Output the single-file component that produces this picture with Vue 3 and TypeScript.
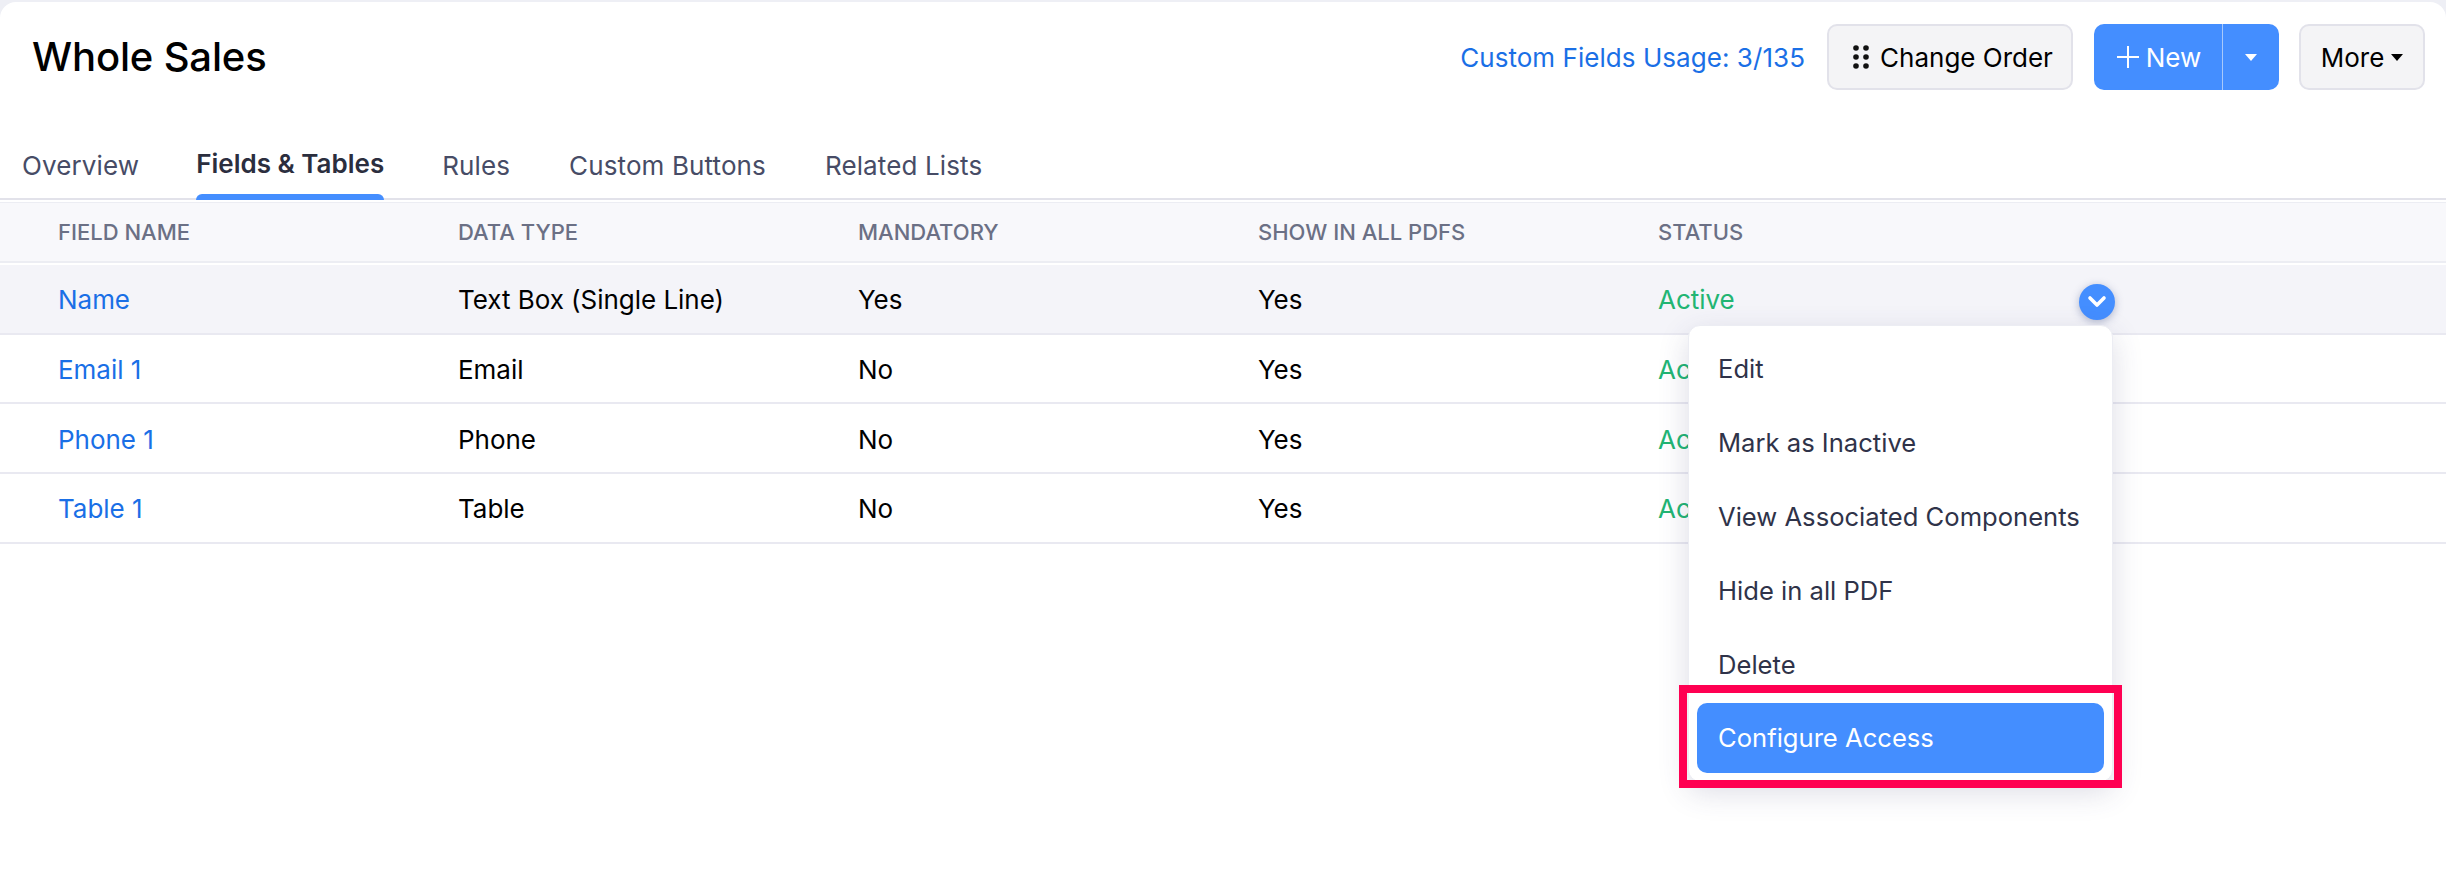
<template>
  <div class="page">
    <div class="sheet">
      <header class="top-bar">
        <h1 class="title">Whole Sales</h1>
        <div class="actions">
          <a class="usage">Custom Fields Usage: 3/135</a>
          <button class="btn btn-order">
            <svg class="grip" width="16" height="24" viewBox="0 0 16 24">
              <circle v-for="dot in gripDots" :key="dot.x + '-' + dot.y" :cx="dot.x" :cy="dot.y" r="2.8" fill="#111" />
            </svg>
            Change Order
          </button>
          <div class="btn-new">
            <button class="new-main">
              <svg width="26" height="26" viewBox="0 0 26 26">
                <path d="M13 2v22M2 13h22" stroke="#fff" stroke-width="2" fill="none" />
              </svg>
              New
            </button>
            <button class="new-caret"><span class="caret caret-white"></span></button>
          </div>
          <button class="btn btn-more">More<span class="caret"></span></button>
        </div>
      </header>

      <nav class="tabs">
        <a v-for="tab in tabs" :key="tab" class="tab" :class="{ active: tab === activeTab }">{{ tab }}</a>
      </nav>

      <div class="table">
        <div class="head-row">
          <div v-for="col in columns" :key="col" class="cell">{{ col }}</div>
        </div>
        <div v-for="(row, i) in rows" :key="row.name" class="row" :class="{ hovered: i === 0 }">
          <div class="cell link">{{ row.name }}</div>
          <div class="cell">{{ row.type }}</div>
          <div class="cell">{{ row.mandatory }}</div>
          <div class="cell">{{ row.pdf }}</div>
          <div class="cell status">Active</div>
        </div>
      </div>

      <button class="row-toggle">
        <svg width="20" height="14" viewBox="0 0 20 14">
          <path d="M3 3l7 7 7-7" stroke="#fff" stroke-width="3.6" fill="none" stroke-linecap="round" stroke-linejoin="round" />
        </svg>
      </button>

      <ul class="menu">
        <li v-for="item in menuItems" :key="item" class="menu-item">{{ item }}</li>
        <li class="menu-item selected">Configure Access</li>
      </ul>
      <div class="highlight"></div>
    </div>
  </div>
</template>

<script setup lang="ts">
type FieldRow = {
  name: string
  type: string
  mandatory: string
  pdf: string
}

const activeTab = 'Fields & Tables'
const tabs = ['Overview', 'Fields & Tables', 'Rules', 'Custom Buttons', 'Related Lists']
const columns = ['FIELD NAME', 'DATA TYPE', 'MANDATORY', 'SHOW IN ALL PDFS', 'STATUS']

const rows: FieldRow[] = [
  { name: 'Name', type: 'Text Box (Single Line)', mandatory: 'Yes', pdf: 'Yes' },
  { name: 'Email 1', type: 'Email', mandatory: 'No', pdf: 'Yes' },
  { name: 'Phone 1', type: 'Phone', mandatory: 'No', pdf: 'Yes' },
  { name: 'Table 1', type: 'Table', mandatory: 'No', pdf: 'Yes' },
]

const menuItems = ['Edit', 'Mark as Inactive', 'View Associated Components', 'Hide in all PDF', 'Delete']

const gripDots = [3, 13].flatMap((x) => [3, 12, 21].map((y) => ({ x, y })))
</script>

<style scoped>
.page {
  width: 2446px;
  height: 892px;
  overflow: hidden;
  padding-top: 2px;
  box-sizing: border-box;
  background: #eeeff5;
  font-family: Inter, 'Liberation Sans', sans-serif;
  font-size: 26px;
  color: #000;
}

.sheet {
  position: relative;
  height: 890px;
  background: #fff;
  border-radius: 16px 16px 0 0;
}

.top-bar {
  display: flex;
  align-items: center;
  justify-content: space-between;
  height: 110px;
  padding: 0 21px 0 32px;
  box-sizing: border-box;
}

.title {
  margin: 0;
  font-size: 40px;
  font-weight: 500;
  letter-spacing: -0.15px;
  position: relative;
  top: -1px;
}

.actions {
  display: flex;
  align-items: center;
}

.usage {
  color: #1a6fe6;
  font-size: 26px;
  letter-spacing: 0.05px;
  margin-right: 22px;
}

.btn {
  height: 66px;
  box-sizing: border-box;
  border: 2px solid #e2e2ea;
  border-radius: 10px;
  background: #f4f4f6;
  font: inherit;
  color: #000;
  display: flex;
  align-items: center;
  justify-content: center;
}

.btn-order {
  width: 246px;
  gap: 11px;
  padding: 0 0 0 6px;
  margin-right: 21px;
}

.btn-new {
  display: flex;
  width: 185px;
  height: 66px;
  border-radius: 10px;
  overflow: hidden;
  background: #448eff;
  margin-right: 20px;
}

.new-main,
.new-caret {
  border: 0;
  background: none;
  color: #fff;
  font: inherit;
  display: flex;
  align-items: center;
  justify-content: center;
  padding: 0;
}

.new-main {
  width: 129px;
  gap: 5px;
  border-right: 1px solid #a8c9fb;
}

.new-caret {
  flex: 1;
}

.caret {
  display: inline-block;
  border-left: 6px solid transparent;
  border-right: 6px solid transparent;
  border-top: 7px solid #000;
}

.caret-white {
  border-top-color: #fff;
}

.btn-more {
  width: 126px;
  gap: 7px;
  padding: 0;
}

.tabs {
  display: flex;
  gap: 59px;
  height: 88px;
  padding-left: 22px;
  box-sizing: border-box;
  border-bottom: 2px solid #e2e2ea;
}

.tab {
  position: relative;
  height: 86px;
  line-height: 108px;
  letter-spacing: 0.12px;
  color: #474c66;
}

.tab.active {
  margin: 0 -1px 0 -2px;
  line-height: 104px;
  letter-spacing: 0;
  font-weight: 600;
  color: #2b2e3e;
}

.tab.active::after {
  content: '';
  position: absolute;
  left: 0;
  right: 0;
  bottom: -2px;
  height: 6px;
  background: #448eff;
  border-radius: 6px 6px 0 0;
}

.table {
  margin-top: 2px;
}

.head-row,
.row {
  display: grid;
  grid-template-columns: repeat(5, 400px);
  align-items: center;
  padding-left: 58px;
  box-sizing: border-box;
}

.head-row {
  height: 61px;
  background: #f8f8fb;
  border-top: 1px solid #ecedf3;
  border-bottom: 2px solid #ecedf3;
  font-size: 22px;
  font-weight: 500;
  color: #6b7085;
  margin-bottom: 2px;
}

.row {
  height: 69.7px;
  padding-top: 2px;
  border-bottom: 2px solid #e9e9f1;
  letter-spacing: -0.03px;
}

.row.hovered {
  background: #f4f4f9;
}

.link {
  color: #1a6fe6;
}

.status {
  color: #22b573;
}

.row-toggle {
  position: absolute;
  left: 2079px;
  top: 282px;
  width: 36px;
  height: 36px;
  padding: 0;
  border: 0;
  border-radius: 50%;
  background: #448eff;
  display: flex;
  align-items: center;
  justify-content: center;
  box-shadow: 0 2px 8px rgba(40, 60, 120, 0.35);
}

.menu {
  position: absolute;
  left: 1688px;
  top: 323px;
  width: 425px;
  height: 457px;
  box-sizing: border-box;
  margin: 0;
  padding: 6px 8px 8px;
  list-style: none;
  background: #fff;
  border: 1px solid #ecedf3;
  border-radius: 12px;
  box-shadow: 0 10px 30px rgba(60, 60, 110, 0.18);
  font-size: 25.6px;
  color: #2f3349;
}

.menu-item {
  height: 74px;
  line-height: 74px;
  padding-left: 21px;
  border-radius: 10px;
}

.menu-item.selected {
  height: 70px;
  line-height: 70px;
  margin-top: 1px;
  background: #448eff;
  color: #fff;
}

.highlight {
  position: absolute;
  left: 1679px;
  top: 683px;
  width: 443px;
  height: 103px;
  box-sizing: border-box;
  border: 8px solid #ff0052;
}
</style>
